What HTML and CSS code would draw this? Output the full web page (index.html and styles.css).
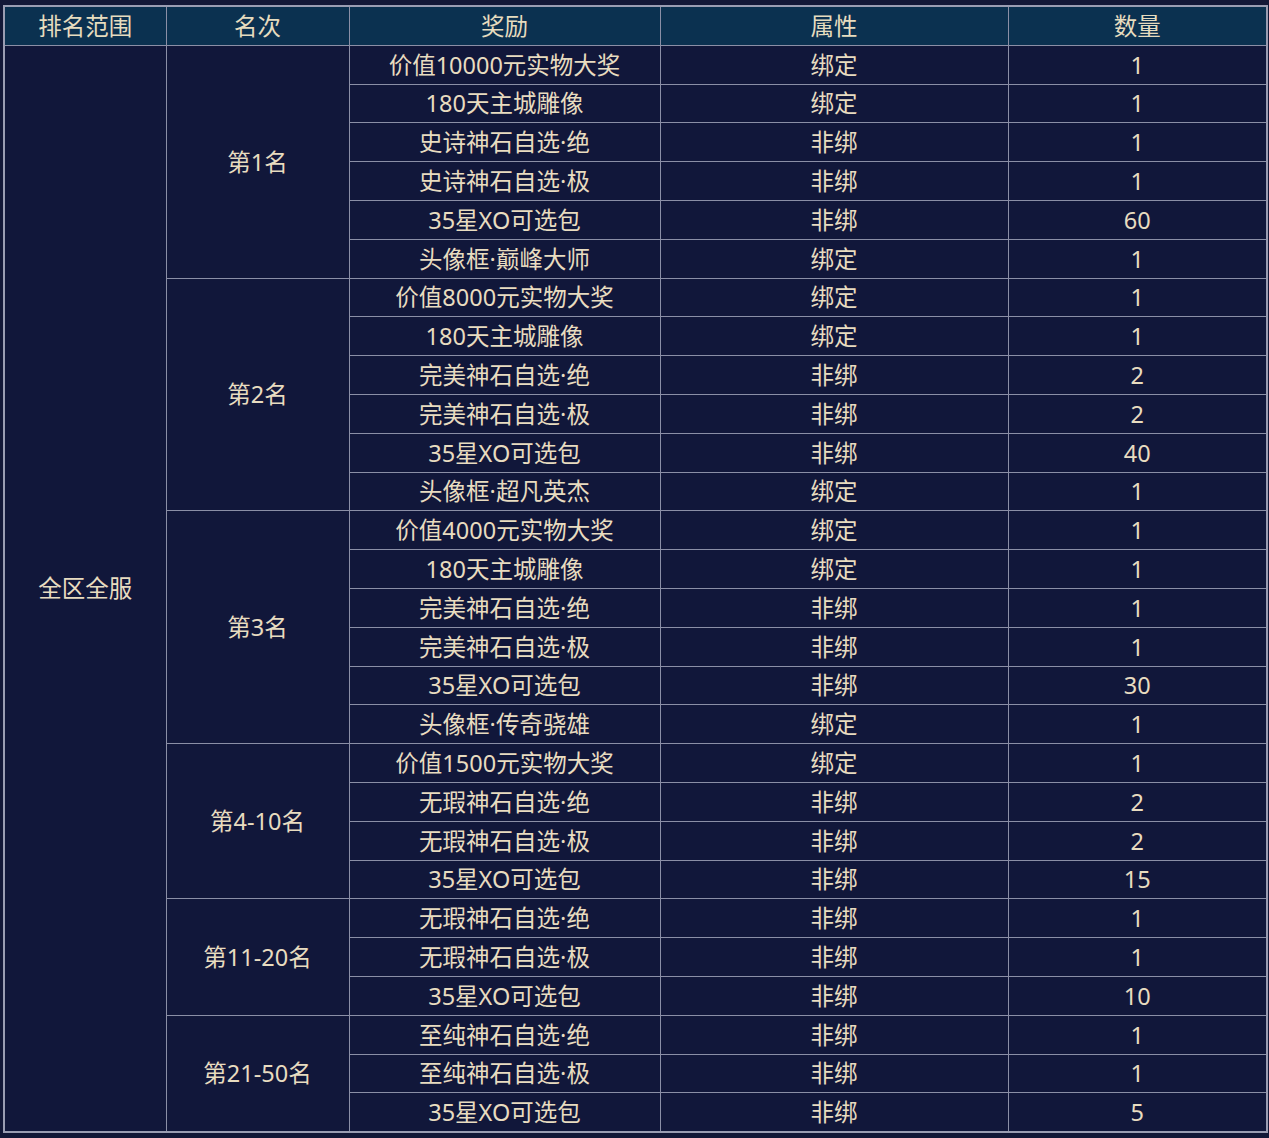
FILE: index.html
```html
<!DOCTYPE html>
<html lang="zh">
<head>
<meta charset="utf-8">
<link rel="stylesheet" href="styles.css">
</head>
<body>
<table class="rewards">
<colgroup>
<col class="c1"><col class="c2"><col class="c3"><col class="c4"><col class="c5">
</colgroup>
<thead>
<tr><th>排名范围</th><th>名次</th><th>奖励</th><th>属性</th><th>数量</th></tr>
</thead>
<tbody>
<tr><td rowspan="28">全区全服</td><td rowspan="6">第1名</td><td>价值10000元实物大奖</td><td>绑定</td><td>1</td></tr>
<tr><td>180天主城雕像</td><td>绑定</td><td>1</td></tr>
<tr><td>史诗神石自选·绝</td><td>非绑</td><td>1</td></tr>
<tr><td>史诗神石自选·极</td><td>非绑</td><td>1</td></tr>
<tr><td>35星XO可选包</td><td>非绑</td><td>60</td></tr>
<tr><td>头像框·巅峰大师</td><td>绑定</td><td>1</td></tr>
<tr><td rowspan="6">第2名</td><td>价值8000元实物大奖</td><td>绑定</td><td>1</td></tr>
<tr><td>180天主城雕像</td><td>绑定</td><td>1</td></tr>
<tr><td>完美神石自选·绝</td><td>非绑</td><td>2</td></tr>
<tr><td>完美神石自选·极</td><td>非绑</td><td>2</td></tr>
<tr><td>35星XO可选包</td><td>非绑</td><td>40</td></tr>
<tr><td>头像框·超凡英杰</td><td>绑定</td><td>1</td></tr>
<tr><td rowspan="6">第3名</td><td>价值4000元实物大奖</td><td>绑定</td><td>1</td></tr>
<tr><td>180天主城雕像</td><td>绑定</td><td>1</td></tr>
<tr><td>完美神石自选·绝</td><td>非绑</td><td>1</td></tr>
<tr><td>完美神石自选·极</td><td>非绑</td><td>1</td></tr>
<tr><td>35星XO可选包</td><td>非绑</td><td>30</td></tr>
<tr><td>头像框·传奇骁雄</td><td>绑定</td><td>1</td></tr>
<tr><td rowspan="4">第4-10名</td><td>价值1500元实物大奖</td><td>绑定</td><td>1</td></tr>
<tr><td>无瑕神石自选·绝</td><td>非绑</td><td>2</td></tr>
<tr><td>无瑕神石自选·极</td><td>非绑</td><td>2</td></tr>
<tr><td>35星XO可选包</td><td>非绑</td><td>15</td></tr>
<tr><td rowspan="3">第11-20名</td><td>无瑕神石自选·绝</td><td>非绑</td><td>1</td></tr>
<tr><td>无瑕神石自选·极</td><td>非绑</td><td>1</td></tr>
<tr><td>35星XO可选包</td><td>非绑</td><td>10</td></tr>
<tr><td rowspan="3">第21-50名</td><td>至纯神石自选·绝</td><td>非绑</td><td>1</td></tr>
<tr><td>至纯神石自选·极</td><td>非绑</td><td>1</td></tr>
<tr><td>35星XO可选包</td><td>非绑</td><td>5</td></tr>
</tbody>
</table>
</body>
</html>
```

FILE: styles.css
```css
html, body {
  margin: 0;
  padding: 0;
  background: #131837;
}
body {
  padding: 5px 3px 0 3px;
  font-family: "Noto Sans", "Noto Sans CJK SC", sans-serif;
  color: #e8dcc0;
}
.rewards {
  width: 1263px;
  border-collapse: collapse;
  table-layout: fixed;
  background: #11173a;
  border: 2px solid #9a9db2;
}
.c1 { width: 162px; }
.c2 { width: 183px; }
.c3 { width: 311px; }
.c4 { width: 348px; }
.c5 { width: 259px; }
.rewards th, .rewards td {
  border: 1.5px solid #8b8fa6;
  text-align: center;
  vertical-align: middle;
  font-size: 23.5px;
  font-weight: 400;
  padding: 0;
  height: 37.8px;
  line-height: 30px;
}
.rewards thead th {
  background: #0b3150;
  color: #e6dcbf;
}
```
